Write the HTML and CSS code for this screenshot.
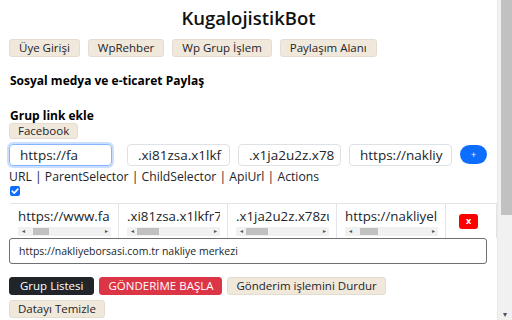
FILE: index.html
```html
<!DOCTYPE html>
<html lang="tr">
<head>
<meta charset="utf-8">
<title>KugalojistikBot</title>
<link rel="stylesheet" href="styles.css">
</head>
<body>
<div class="page">
  <main class="main">
    <h1 class="title">KugalojistikBot</h1>
    <nav class="nav">
      <button class="btn btn-beige">Üye Girişi</button>
      <button class="btn btn-beige">WpRehber</button>
      <button class="btn btn-beige">Wp Grup İşlem</button>
      <button class="btn btn-beige">Paylaşım Alanı</button>
    </nav>
    <h2 class="section">Sosyal medya ve e-ticaret Paylaş</h2>
    <h2 class="section section-2">Grup link ekle</h2>
    <div class="fb-row"><button class="btn btn-beige">Facebook</button></div>
    <div class="inputs">
      <div class="field field-focus">https://fa</div>
      <div class="field">.xi81zsa.x1lkf</div>
      <div class="field">.x1ja2u2z.x78</div>
      <div class="field">https://nakliy</div>
      <button class="plus">+</button>
    </div>
    <div class="legend">URL | ParentSelector | ChildSelector | ApiUrl | Actions</div>
    <div class="check"><svg width="10" height="10" viewBox="0 0 10 10"><path d="M2.2 5.2 L4.2 7.1 L7.9 3.1" fill="none" stroke="#fff" stroke-width="1.6" stroke-linecap="round" stroke-linejoin="round"/></svg></div>
    <div class="table">
      <div class="cell">
        <div class="cell-text">https://www.fa</div>
        <div class="hscroll"><span class="arr">◂</span><span class="thumb thumb-a"></span><span class="fill"></span><span class="arr">▸</span></div>
      </div>
      <div class="cell">
        <div class="cell-text">.xi81zsa.x1lkfr7t</div>
        <div class="hscroll"><span class="arr">◂</span><span class="thumb thumb-b"></span><span class="fill"></span><span class="arr">▸</span></div>
      </div>
      <div class="cell">
        <div class="cell-text">.x1ja2u2z.x78zu</div>
        <div class="hscroll"><span class="arr">◂</span><span class="thumb thumb-b"></span><span class="fill"></span><span class="arr">▸</span></div>
      </div>
      <div class="cell">
        <div class="cell-text">https://nakliyel</div>
        <div class="hscroll"><span class="arr">◂</span><span class="thumb thumb-c"></span><span class="fill"></span><span class="arr">▸</span></div>
      </div>
      <div class="cell cell-action">
        <button class="del">x</button>
      </div>
    </div>
    <div class="textbox">https://nakliyeborsasi.com.tr nakliye merkezi</div>
    <div class="actions">
      <button class="btn btn-dark">Grup Listesi</button>
      <button class="btn btn-red">GÖNDERİME BAŞLA</button>
      <button class="btn btn-beige">Gönderim işlemini Durdur</button>
    </div>
    <div class="actions actions-2">
      <button class="btn btn-beige">Datayı Temizle</button>
    </div>
  </main>
  <aside class="vscroll">
    <div class="vthumb"></div>
    <div class="vspace"></div>
    <div class="varrow">▾</div>
  </aside>
</div>
</body>
</html>
```
FILE: styles.css
```css
* { box-sizing: border-box; }
html, body { margin: 0; padding: 0; }
body {
  width: 512px;
  height: 320px;
  overflow: hidden;
  background: #fff;
  font-family: "Open Sans", "Noto Sans", sans-serif;
  color: #212529;
}
.page {
  display: flex;
  height: 320px;
}
.main {
  flex: 1;
  padding: 0 0 0 9px;
  min-width: 0;
}
.title {
  margin: 6px 0 0 -9px;
  height: 24px;
  line-height: 24px;
  text-align: center;
  font-size: 18.5px;
  font-weight: 600;
  color: #111;
}
.nav {
  display: flex;
  gap: 8px;
  margin-top: 9px;
}
.btn {
  display: block;
  font-family: inherit;
  font-size: 11.5px;
  line-height: 14px;
  height: 18px;
  padding: 1px 8px;
  border: 1px solid transparent;
  border-radius: 3px;
  color: #212529;
  cursor: pointer;
}
.nav .btn { padding: 1px 9px; }
.btn-beige {
  background: #f1e8dc;
  border-color: #e4dccf;
}
.section {
  margin: 16px 0 0 1px;
  height: 16px;
  font-size: 12px;
  font-weight: 700;
  line-height: 16px;
  color: #000;
}
.section-2 { margin-top: 20px; height: 14px; line-height: 14px; }
.fb-row { display: flex; }
.fb-row .btn { height: 16px; line-height: 12px; }
.inputs {
  display: flex;
  align-items: center;
  margin-top: 4px;
  height: 23px;
}
.field {
  width: 103px;
  height: 22px;
  border: 1px solid #dee2e6;
  border-radius: 4px;
  padding: 0 10px;
  font-size: 13.5px;
  line-height: 20px;
  overflow: hidden;
  white-space: nowrap;
  color: #212529;
  margin-right: 8px;
}
.field-focus {
  border-color: #86b7fe;
  box-shadow: 0 0 0 2px rgba(13,110,253,0.22);
  margin-right: 15px;
}
.plus {
  width: 27px;
  height: 19px;
  border: 0;
  border-radius: 10px;
  background: #0d6efd;
  color: #fff;
  font-size: 9px;
  line-height: 19px;
  padding: 0;
  font-family: inherit;
}
.legend {
  margin-top: 3px;
  height: 16px;
  font-size: 12.2px;
  line-height: 16px;
  color: #212529;
  white-space: nowrap;
}
.check {
  width: 10px;
  height: 10px;
  margin: 1px 0 0 1px;
  background: #0d6efd;
  border-radius: 2px;
  display: flex;
}
.table {
  display: flex;
  margin-top: 7px;
  height: 35px;
  border-top: 1px solid #e2e4e7;
  margin-left: 1px;
}
.cell {
  width: 109px;
  border-left: 1px solid #e2e4e7;
  padding: 5px 7px 0 8px;
  overflow: hidden;
}
.cell:first-child { width: 108px; border-left: 0; }
.cell-text {
  font-size: 13.3px;
  line-height: 15px;
  white-space: nowrap;
  overflow: hidden;
  color: #212529;
}
.hscroll {
  display: flex;
  align-items: center;
  height: 9px;
  margin-top: 3px;
  background: #f1f1f1;
}
.arr {
  font-size: 6px;
  line-height: 9px;
  width: 10px;
  text-align: center;
  color: #505050;
}
.thumb {
  height: 7px;
  background: #c1c1c1;
}
.thumb-a { width: 16px; margin-left: 5px; }
.thumb-b { width: 22px; margin-left: 0; }
.thumb-c { width: 18px; margin-left: 5px; }
.fill { flex: 1; }
.cell-action {
  width: 50px;
  flex: 1;
  padding: 0;
  display: flex;
  justify-content: center;
  align-items: center;
  border-right: 1px solid #e2e4e7;
}
.del {
  width: 19px;
  height: 15px;
  border: 0;
  border-radius: 3px;
  background: #ff0000;
  color: #fff;
  font-family: inherit;
  font-size: 9px;
  font-weight: 700;
  line-height: 14px;
  padding: 0;
  margin-right: 5px;
}
.textbox {
  width: 478px;
  height: 26px;
  border: 1px solid #707070;
  border-radius: 3px;
  padding: 0 9px;
  font-size: 10.5px;
  line-height: 24px;
  color: #212529;
}
.actions {
  display: flex;
  gap: 5px;
  margin-top: 13px;
}
.actions-2 { margin-top: 5px; }
.btn-dark {
  background: #212529;
  border-color: #212529;
  color: #fff;
  padding: 1px 10px;
}
.btn-red {
  background: #dc3545;
  border-color: #dc3545;
  color: #fff;
}
.vscroll {
  width: 15px;
  height: 320px;
  background: #f1f1f1;
  border-left: 1px solid #e8e8e8;
  display: flex;
  flex-direction: column;
  align-items: center;
}
.vthumb {
  width: 11px;
  height: 215px;
  background: #c1c1c1;
  margin-left: 2px;
}
.vspace { flex: 1; }
.varrow {
  font-size: 8px;
  line-height: 10px;
  color: #505050;
  margin-bottom: 1px;
}
```
